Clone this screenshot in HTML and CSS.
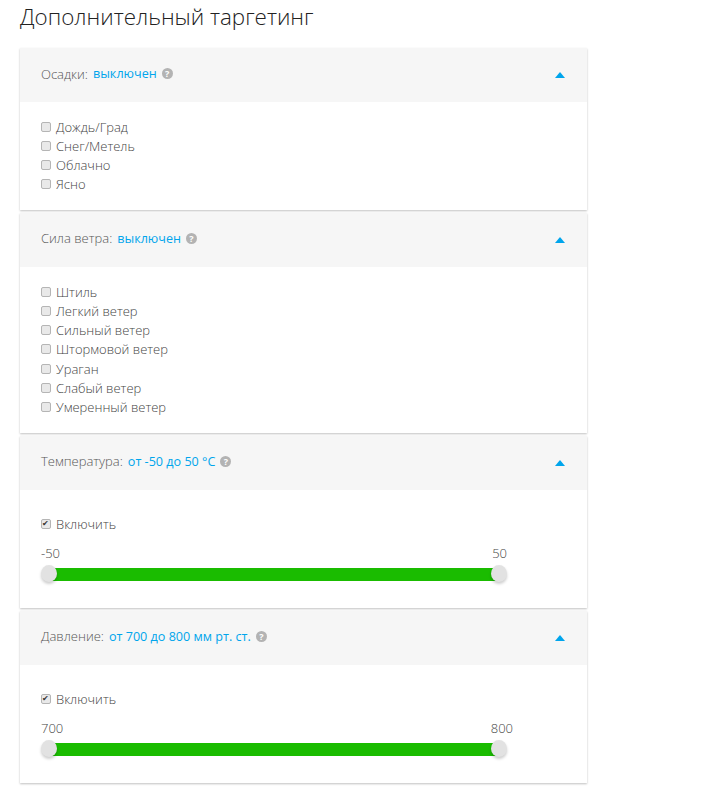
FILE: index.html
```html
<!DOCTYPE html>
<html lang="en">

<head>
    <meta charset="UTF-8">
    <meta name="viewport" content="width=device-width, initial-scale=1.0">
    <title>Дополнительный таргетинг</title>
    <link rel="stylesheet" href="styles.css">
</head>

<body>
    <h1 class="page-title">Дополнительный таргетинг</h1>

    <!--Осадки-->
    <section class="panel">
        <div class="panel-head">
            <span class="panel-name">Осадки:</span>
            <span class="panel-value">выключен</span>
            <span class="help">?</span>
            <span class="arrow"></span>
        </div>
        <div class="panel-body">
            <label class="check"><input type="checkbox">Дождь/Град</label>
            <label class="check"><input type="checkbox">Снег/Метель</label>
            <label class="check"><input type="checkbox">Облачно</label>
            <label class="check"><input type="checkbox">Ясно</label>
        </div>
    </section>

    <!--Ветер-->
    <section class="panel">
        <div class="panel-head">
            <span class="panel-name">Сила ветра:</span>
            <span class="panel-value">выключен</span>
            <span class="help">?</span>
            <span class="arrow"></span>
        </div>
        <div class="panel-body">
            <label class="check"><input type="checkbox">Штиль</label>
            <label class="check"><input type="checkbox">Легкий ветер</label>
            <label class="check"><input type="checkbox">Сильный ветер</label>
            <label class="check"><input type="checkbox">Штормовой ветер</label>
            <label class="check"><input type="checkbox">Ураган</label>
            <label class="check"><input type="checkbox">Слабый ветер</label>
            <label class="check"><input type="checkbox">Умеренный ветер</label>
        </div>
    </section>

    <!--Температура-->
    <section class="panel">
        <div class="panel-head">
            <span class="panel-name">Температура:</span>
            <span class="panel-value">от -50 до 50 °C</span>
            <span class="help">?</span>
            <span class="arrow"></span>
        </div>
        <div class="panel-body range-body">
            <label class="check"><input type="checkbox" checked>Включить</label>
            <div class="range-labels labels-short">
                <span>-50</span>
                <span>50</span>
            </div>
            <div class="slider">
                <div class="slider-fill"></div>
                <span class="thumb thumb-left"></span>
                <span class="thumb thumb-right"></span>
            </div>
        </div>
    </section>

    <!--Давление-->
    <section class="panel">
        <div class="panel-head">
            <span class="panel-name">Давление:</span>
            <span class="panel-value">от 700 до 800 мм рт. ст.</span>
            <span class="help">?</span>
            <span class="arrow"></span>
        </div>
        <div class="panel-body range-body">
            <label class="check"><input type="checkbox" checked>Включить</label>
            <div class="range-labels">
                <span>700</span>
                <span>800</span>
            </div>
            <div class="slider">
                <div class="slider-fill"></div>
                <span class="thumb thumb-left"></span>
                <span class="thumb thumb-right"></span>
            </div>
        </div>
    </section>
</body>

</html>
```

FILE: styles.css
```css
* {
    box-sizing: border-box;
    margin: 0;
    padding: 0;
}

body {
    padding: 0 0 26px 20px;
    background-color: #ffffff;
    font-family: 'Open Sans', Arial, sans-serif;
    font-size: 13px;
    font-weight: 300;
    color: #444444;
}

.page-title {
    height: 48px;
    font-size: 22.4px;
    font-weight: 300;
    line-height: 33px;
    color: #222222;
}

/*PANELS*/
.panel {
    width: 567px;
    margin-bottom: 3px;
    background-color: #ffffff;
    box-shadow: 0 1px 2px rgba(0, 0, 0, 0.25);
}

.panel-head {
    display: flex;
    align-items: center;
    height: 54px;
    padding: 0 22px 3px 21px;
    background-color: #f6f6f6;
}

.panel-name {
    margin-right: 5px;
    color: #555555;
}

.panel-value {
    color: #00a5ec;
    font-weight: 400;
    font-size: 12.6px;
}

.help {
    width: 11px;
    height: 11px;
    margin-left: 5px;
    border-radius: 50%;
    background-color: #b3b3b3;
    color: #ffffff;
    font-size: 9px;
    font-weight: 700;
    line-height: 11px;
    text-align: center;
}

.arrow {
    width: 0;
    height: 0;
    margin-top: 3px;
    margin-left: auto;
    border-left: 5px solid transparent;
    border-right: 5px solid transparent;
    border-bottom: 6px solid #00a5ec;
}

.panel-body {
    padding: 14.9px 22px 16.1px 21px;
}

.range-body {
    padding-top: 24.7px;
    padding-bottom: 16px;
}

.check {
    display: flex;
    align-items: center;
    height: 19.25px;
}

.check input {
    appearance: none;
    position: relative;
    width: 10px;
    height: 10px;
    margin-right: 5px;
    border: 1px solid #b5b5b5;
    border-radius: 2px;
    background-color: #e9e9e9;
}

.check input:checked::after {
    content: "✔";
    position: absolute;
    top: -1px;
    left: 0;
    font-size: 8px;
    font-weight: 400;
    line-height: 10px;
    color: #333333;
}

/*SLIDER*/
.range-labels {
    display: flex;
    justify-content: space-between;
    width: 472px;
    margin-top: 10.3px;
    line-height: 19px;
}

.labels-short {
    width: 466px;
}

.slider {
    position: relative;
    width: 466px;
    height: 13px;
    margin-top: 5px;
    margin-bottom: 11px;
}

.slider-fill {
    height: 13px;
    margin: 0 8px;
    background-color: #1abc00;
}

.thumb {
    position: absolute;
    top: -3px;
    width: 16px;
    height: 17px;
    border-radius: 50%;
    background-color: #e2e2e2;
    box-shadow: 0 2px 3px rgba(0, 0, 0, 0.2);
}

.thumb-left {
    left: 0;
}

.thumb-right {
    right: 0;
}
```
